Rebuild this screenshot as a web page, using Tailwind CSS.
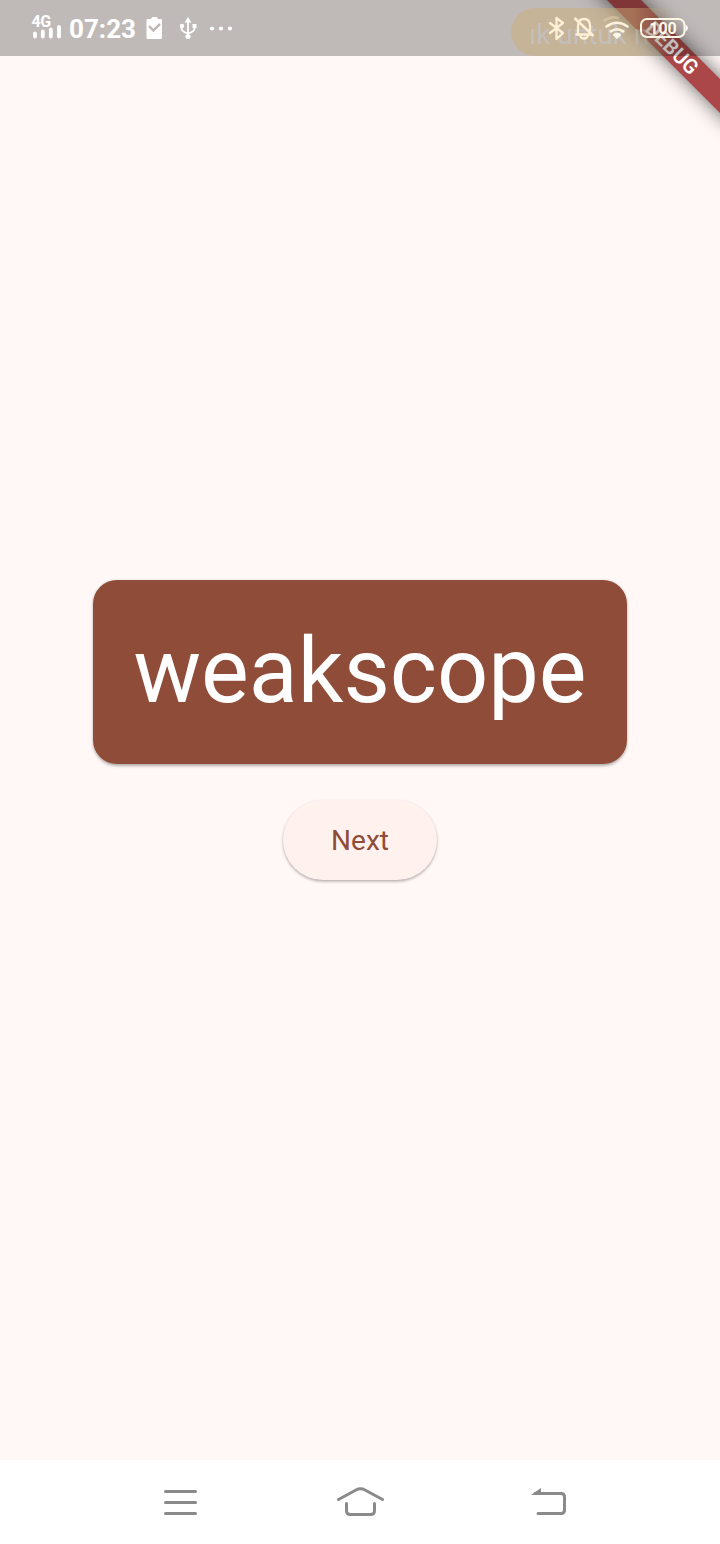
<!DOCTYPE html>
<html lang="en">
<head>
<meta charset="utf-8">
<title>weakscope</title>
<script src="https://cdn.jsdelivr.net/npm/@tailwindcss/browser@4"></script>
</head>
<body class="bg-[#fff8f6] font-[Roboto,sans-serif]">
<div class="relative flex h-[1544px] w-[720px] flex-col overflow-hidden">
  <!-- debug ribbon -->
  <div class="absolute left-[572px] top-[36px] flex h-[24px] w-[200px] rotate-45 items-center justify-center bg-[#ab4749] shadow-[0_0_20px_rgba(0,0,0,0.6)]">
    <span class="text-[20.4px] font-semibold leading-none text-white">DEBUG</span>
  </div>

  <!-- status bar -->
  <header class="relative flex h-[56px] shrink-0 items-start bg-black/25 text-white">
    <!-- floating hint -->
    <div class="absolute left-[511px] top-[8px] flex h-[48px] w-[174px] items-center overflow-hidden rounded-full bg-linear-to-r from-[#cbae78]/50 from-70% to-[#cbae78]/0 to-95% pl-[18px]">
      <span class="whitespace-nowrap bg-linear-to-r from-[#c3c3ca]/75 from-75% to-[#c3c3ca]/0 bg-clip-text pt-[5px] text-[28px] leading-none text-transparent">ık untuk m</span>
    </div>
    <div class="relative ml-[31px] mt-[13px] w-[32px]">
      <div class="h-[16px] pl-[0.5px] pt-px text-[16px] font-bold leading-[16px] tracking-[-0.5px]">4G</div>
      <svg class="absolute left-0 top-0" width="32" height="28" viewBox="0 0 32 28" stroke="#fff" stroke-width="3.8" stroke-linecap="round"><path d="M4 20.500v3M11.800 18.500v5M19.800 16.500v7M28 14v9.500"/></svg>
    </div>
    <div class="relative ml-[6px] mt-[13px] w-[68px] text-[26px] font-bold leading-[32px]">07:23</div>
    <svg class="relative ml-[8px] mt-[15px]" width="18" height="26" viewBox="0 0 18 26"><path d="M2.500 4h3.500q.5-2 2-2h3q1.500 0 2 2h3q1 0 1 1v18q0 1-1 1H2.500q-1 0-1-1V5q0-1 1-1z" fill="#fff"/><path d="m4 11 4.300 4.500L15 9" fill="none" stroke="#bfbab8" stroke-width="2.500"/></svg>
    <svg class="relative ml-[15px] mt-[15px]" width="20" height="26" viewBox="0 0 20 26" fill="none" stroke="#fff" stroke-width="1.800"><path d="M10 6v15M3.500 11v2.500q0 3 6.500 5 6.500-2 6.500-5V11"/><path d="m10 2 3.500 5.500h-7zM14.500 9h4v4h-4z" fill="#fff" stroke="none"/><circle cx="4" cy="11" r="2.200" fill="#fff" stroke="none"/><circle cx="10" cy="21.500" r="2.600" fill="#fff" stroke="none"/></svg>
    <svg class="relative ml-[11px] mt-[26px]" width="24" height="5" fill="#fff"><circle cx="3" cy="2.500" r="2.100"/><circle cx="12" cy="2.500" r="2.100"/><circle cx="21" cy="2.500" r="2.100"/></svg>

    <svg class="relative ml-[315px] mt-[15px]" width="18" height="26" viewBox="0 0 18 26" fill="none" stroke="#fff0d5" stroke-width="2.300" stroke-linejoin="round" stroke-linecap="round"><path d="m2 8 13 10-6.500 6V3L15 8 2 18"/></svg>
    <svg class="relative ml-[7px] mt-[15px]" width="22" height="26" viewBox="0 0 22 26" fill="none" stroke="#fff0d5" stroke-width="2.300"><path d="M5 19.500V11q0-7 6-7t6 7v8.500M2.500 19.500h17M7.500 20.500q0 3 3.500 3t3.500-3"/><path d="M1.500 3 20.500 21" stroke-width="2.600"/></svg>
    <svg class="relative ml-[7px] mt-[16px]" width="30" height="26" viewBox="0 0 30 26" fill="none"><path d="M1.500 5.500Q8-.5 17 2.200" stroke="#e6d3ad" stroke-opacity=".45" stroke-width="2.600"/><path d="M4.500 10.500q10.500-7.500 21 0M8.700 15.500q6.300-4.500 12.600 0" stroke="#fff3dd" stroke-width="2.600" stroke-linecap="round"/><path d="m15 22.500-4-3.800q4-3.200 8 0z" fill="#fff8e8" stroke="#fff8e8" stroke-linejoin="round"/></svg>
    <svg class="relative ml-[7px] mt-[17px]" width="50" height="22" viewBox="0 0 50 22"><rect x="2" y="2" width="43.500" height="18" rx="6" fill="none" stroke="#fff6e6" stroke-width="2"/><path d="M46.500 7.500q2.500 1 2.500 3.500t-2.500 3.500z" fill="#fff"/><text x="24" y="16.500" text-anchor="middle" font-family="Roboto" font-size="16" font-weight="700" fill="#fff6e6">100</text></svg>
  </header>

  <main class="flex h-[1404px] shrink-0 flex-col items-center pt-[524px]">
    <div class="flex h-[184px] w-[534px] items-center justify-center rounded-[24px] bg-[#8f4c38] shadow-[0_1.5px_3px_rgba(0,0,0,0.3)]">
      <span class="text-[90px] leading-none text-white">weakscope</span>
    </div>
    <button class="mt-[36px] flex h-[80px] w-[154px] items-center justify-center rounded-full bg-[#fff1ed] pt-[2px] text-[28px] text-[#8f4c38] shadow-[0_1.5px_3px_rgba(0,0,0,0.3)]">Next</button>
  </main>

  <nav class="flex h-[84px] shrink-0 items-start bg-white pt-[24px]">
    <svg class="ml-[163px]" width="36" height="36" fill="none" stroke="#8a8a8a" stroke-width="3" stroke-linecap="round"><path d="M2.500 7.500h30M2.500 18.500h30M2.500 29.500h30"/></svg>
    <svg class="ml-[136px]" width="50" height="36" fill="none" stroke="#8a8a8a" stroke-width="3" stroke-linecap="round"><path d="m3.500 15.500 17.500-9.500q4.500-2.500 9 0l17.500 9.500M11.500 19.500v7q0 4 4 4h20q4 0 4-4v-7"/></svg>
    <svg class="ml-[144px]" width="40" height="36" fill="none" stroke="#8a8a8a" stroke-width="3" stroke-linecap="round"><path d="M6 9.500h26q3.500 0 3.500 3.500v13q0 3.500-3.500 3.500H9"/><path d="M2 11 12 4v7z" fill="#8a8a8a" stroke="none"/></svg>
  </nav>
</div>
</body>
</html>
